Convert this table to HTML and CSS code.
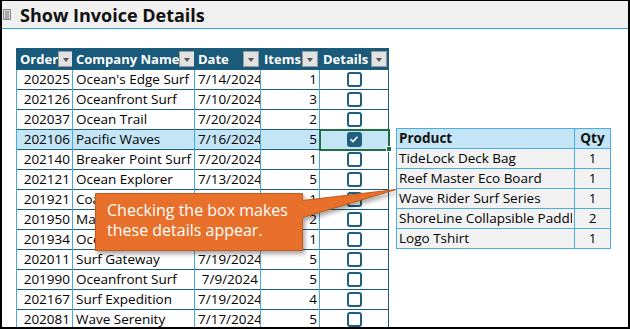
FILE: index.html
```html
<!DOCTYPE html>
<html>
<head>
<meta charset="utf-8">
<link rel="stylesheet" href="styles.css">
</head>
<body>
<div class="frame">
  <header class="titlebar">
    <svg class="sheet-icon" width="8" height="11" viewBox="0 0 8 11"><rect x="0.5" y="0.5" width="7" height="10" fill="#d8d8d8" stroke="#8a8a8a"/><path d="M2 3h4M2 5h4M2 7h4M2 9h4" stroke="#777" stroke-width="1"/></svg>
    <h1>Show Invoice Details</h1>
  </header>
  <main class="sheet">
    <table class="orders">
      <colgroup><col class="c-order"><col class="c-company"><col class="c-date"><col class="c-items"><col class="c-details"></colgroup>
      <thead>
        <tr>
          <th><div class="hcell">Order<span class="filter"></span></div></th>
          <th><div class="hcell">Company Name<span class="filter"></span></div></th>
          <th><div class="hcell">Date<span class="filter"></span></div></th>
          <th><div class="hcell">Items<span class="filter"></span></div></th>
          <th><div class="hcell">Details<span class="filter"></span></div></th>
        </tr>
      </thead>
      <tbody>
        <tr><td class="num">202025</td><td>Ocean's Edge Surf</td><td class="num">7/14/2024</td><td class="num">1</td><td class="chk"><span class="box"></span></td></tr>
        <tr><td class="num">202126</td><td>Oceanfront Surf</td><td class="num">7/10/2024</td><td class="num">3</td><td class="chk"><span class="box"></span></td></tr>
        <tr><td class="num">202037</td><td>Ocean Trail</td><td class="num">7/20/2024</td><td class="num">2</td><td class="chk"><span class="box"></span></td></tr>
        <tr class="sel"><td class="num">202106</td><td>Pacific Waves</td><td class="num">7/16/2024</td><td class="num">5</td><td class="chk active"><span class="box on"><svg width="14" height="14" viewBox="0 0 14 14"><path d="M3.5 7.2l2.4 2.4 4.6-4.8" fill="none" stroke="#fff" stroke-width="1.6"/></svg></span><span class="handle"></span></td></tr>
        <tr><td class="num">202140</td><td>Breaker Point Surf</td><td class="num">7/20/2024</td><td class="num">1</td><td class="chk"><span class="box"></span></td></tr>
        <tr><td class="num">202121</td><td>Ocean Explorer</td><td class="num">7/13/2024</td><td class="num">5</td><td class="chk"><span class="box"></span></td></tr>
        <tr><td class="num">201921</td><td>Coastal Breeze</td><td class="num">7/11/2024</td><td class="num">1</td><td class="chk"><span class="box"></span></td></tr>
        <tr><td class="num">201950</td><td>Marina Surf Co</td><td class="num">7/12/2024</td><td class="num">2</td><td class="chk"><span class="box"></span></td></tr>
        <tr><td class="num">201934</td><td>Ocean Crest</td><td class="num">7/15/2024</td><td class="num">1</td><td class="chk"><span class="box"></span></td></tr>
        <tr><td class="num">202011</td><td>Surf Gateway</td><td class="num">7/19/2024</td><td class="num">5</td><td class="chk"><span class="box"></span></td></tr>
        <tr><td class="num">201990</td><td>Oceanfront Surf</td><td class="num">7/9/2024</td><td class="num">5</td><td class="chk"><span class="box"></span></td></tr>
        <tr><td class="num">202167</td><td>Surf Expedition</td><td class="num">7/19/2024</td><td class="num">4</td><td class="chk"><span class="box"></span></td></tr>
        <tr><td class="num">202081</td><td>Wave Serenity</td><td class="num">7/17/2024</td><td class="num">5</td><td class="chk"><span class="box"></span></td></tr>
      </tbody>
    </table>

    <table class="details">
      <colgroup><col class="c-product"><col class="c-qty"></colgroup>
      <thead><tr><th>Product</th><th class="qty">Qty</th></tr></thead>
      <tbody>
        <tr><td>TideLock Deck Bag</td><td class="qty">1</td></tr>
        <tr><td>Reef Master Eco Board</td><td class="qty">1</td></tr>
        <tr><td>Wave Rider Surf Series</td><td class="qty">1</td></tr>
        <tr><td><div class="clip">ShoreLine Collapsible Paddle</div></td><td class="qty">2</td></tr>
        <tr><td>Logo Tshirt</td><td class="qty">1</td></tr>
      </tbody>
    </table>

    <div class="callout">
      <svg class="callout-shape" width="310" height="75" viewBox="0 0 310 75">
        <path d="M3.5 8.5H210.5V15.5L304 4.5L210.5 32.5V65.5H3.5Z" fill="#e8702b" stroke="#c25a1c" stroke-width="1"/>
      </svg>
      <p class="callout-text">Checking the box makes<br>these details appear.</p>
    </div>
  </main>
</div>
</body>
</html>
```
FILE: styles.css
```css
* { box-sizing: border-box; }
html, body { margin: 0; padding: 0; }
body { width: 630px; height: 329px; overflow: hidden; background: #fff; }

.frame {
  width: 630px;
  height: 329px;
  border: 2px solid #000;
  border-top-width: 1px;
  background: #fff;
  display: flex;
  flex-direction: column;
  overflow: hidden;
}

.titlebar {
  height: 28px;
  flex: none;
  background: #f0f0f0;
  border-bottom: 1px solid #2aa9e0;
  display: flex;
  align-items: center;
  padding-left: 1px;
  gap: 9px;
}
.sheet-icon { flex: none; }
.titlebar h1 {
  margin: 0;
  font-family: "Open Sans", Lato, sans-serif;
  font-stretch: 90%;
  font-weight: 700;
  font-size: 18px;
  color: #111;
  line-height: 1;
}

.sheet {
  position: relative;
  flex: 1;
  display: flex;
  align-items: flex-start;
  padding: 19px 0 0 14px;
  font-family: "Open Sans", "Liberation Sans", sans-serif;
  font-stretch: 90%;
  font-size: 13.5px;
  color: #000;
}

table { border-collapse: collapse; table-layout: fixed; }
td, th { padding: 0; height: 20px; white-space: nowrap; overflow: hidden; }

.orders { width: 372px; border: 1px solid #1c5c7c; }
.c-order { width: 56px; }
.c-company { width: 122px; }
.c-date { width: 66px; }
.c-items { width: 59px; }
.c-details { width: 69px; }

.orders th {
  background: #1a5a7b;
  color: #fff;
  font-weight: 700;
  font-size: 13px;
  text-align: left;
  border-left: 1px solid #1a5a7b;
}
.hcell { display: flex; align-items: center; padding-left: 3px; padding-right: 1px; height: 20px; }
.filter {
  margin-left: auto;
  width: 16px;
  height: 16px;
  background: #e2e2e2;
  border: 1px solid #9a9a9a;
  position: relative;
  flex: none;
}
.filter::after {
  content: "";
  position: absolute;
  left: 4px;
  top: 6px;
  border-left: 3.5px solid transparent;
  border-right: 3.5px solid transparent;
  border-top: 4px solid #555;
}
.orders td {
  border-top: 1px solid #1c5c7c;
  border-left: 1px solid #47aadc;
  padding: 0 2px 0 3px;
  line-height: 19px;
}
.orders td.num { text-align: right; }
.orders tr.sel td { background: #c3e5f5; }
.orders td.chk { text-align: center; position: relative; overflow: visible; }
.box {
  display: inline-block;
  width: 15px;
  height: 15px;
  border: 2px solid #1f5f80;
  border-radius: 3px;
  vertical-align: middle;
  margin-top: -2px;
}
.box.on { background: #1f5f80; border-color: #1f5f80; }
.box.on svg { display: block; margin: -2px 0 0 -2px; }
.orders td.active { outline: 2px solid #1d7044; outline-offset: -1px; }
.handle {
  position: absolute;
  right: -4px;
  bottom: -3px;
  width: 6px;
  height: 6px;
  background: #1d7044;
  border: 1px solid #fff;
}

.details { width: 214px; margin: 80px 0 0 7px; border: 1px solid #4aaee0; }
.c-product { width: 178px; }
.c-qty { width: 36px; }
.details th, .details td { border: 1px solid #4aaee0; padding: 0 2px; line-height: 19px; }
.details th { background: #c3e5f5; color: #111; font-weight: 700; text-align: left; }
.details td { background: #f2f2f2; }
.details .qty { text-align: center; }
.clip { overflow: hidden; }

.callout {
  position: absolute;
  left: 90px;
  top: 156px;
  width: 310px;
  height: 75px;
}
.callout-shape {
  position: absolute;
  left: 0;
  top: 0;
  filter: drop-shadow(2px 3px 2px rgba(0,0,0,0.35));
}
.callout-text {
  position: absolute;
  left: 15px;
  top: 15px;
  margin: 0;
  font-family: "Open Sans", Lato, sans-serif;
  font-stretch: 92%;
  font-size: 16px;
  line-height: 20px;
  color: #fff;
}
```
